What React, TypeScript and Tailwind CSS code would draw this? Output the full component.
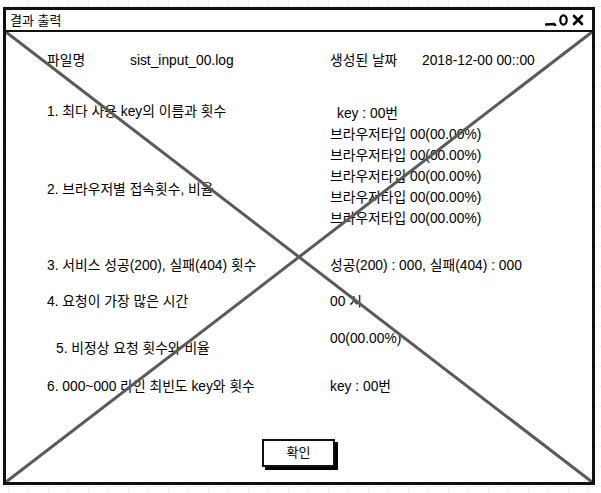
const font = "font-['Liberation_Sans','Noto_Sans_CJK_KR',sans-serif]";

const browsers = Array.from({ length: 5 }, () => '브라우저타입 00(00.00%)');

function WindowControls() {
  return (
    <svg width="42" height="12" viewBox="0 0 42 12" className="mr-[5px]">
      <path d="M1 10.5 L9 10 L10 11" stroke="#000" strokeWidth="2.6" fill="none" strokeLinecap="round" />
      <ellipse cx="18.5" cy="6" rx="3.2" ry="4.6" stroke="#000" strokeWidth="2.2" fill="none" />
      <path d="M29 2 L37 10 M37 2 L29 10" stroke="#000" strokeWidth="2.6" fill="none" strokeLinecap="round" />
    </svg>
  );
}

export default function App() {
  return (
    <div
      className={`min-h-[493px] w-[601px] bg-white bg-[linear-gradient(to_right,#efefef_1px,transparent_1px),linear-gradient(to_bottom,#efefef_1px,transparent_1px)] bg-[size:20px_20px] bg-[position:8px_6px] pt-[7px] pl-[3px] ${font} text-black`}
    >
      <div className="flex h-[478px] w-[592px] flex-col border-[3px] border-[#111] bg-white">
        <div className="flex h-[22px] shrink-0 items-center justify-between border-b-[2px] border-[#111] pl-[4px]">
          <span className="text-[13px] leading-none">결과 출력</span>
          <WindowControls />
        </div>

        <div className="relative flex-1 pl-[41px] text-[13.8px]">
          {/* file name / date */}
          <div className="mt-[19px] flex leading-5">
            <div className="flex w-[283px]">
              <span className="w-[83px]">파일명</span>
              <span>sist_input_00.log</span>
            </div>
            <div className="flex">
              <span className="w-[92px]">생성된 날짜</span>
              <span>2018-12-00 00::00</span>
            </div>
          </div>

          {/* 1, 2 */}
          <div className="mt-[31px] flex">
            <div className="flex w-[283px] flex-col leading-5">
              <span>1. 최다 사용 key의 이름과 횟수</span>
              <span className="mt-[58px]">2. 브라우저별 접속횟수, 비율</span>
            </div>
            <div className="flex flex-col pt-[1px] leading-[21px]">
              <span className="pl-[7px]">key : 00번</span>
              {browsers.map((b, i) => (
                <span key={i}>{b}</span>
              ))}
            </div>
          </div>

          <div className="mt-[27px] flex leading-5">
            <span className="w-[283px]">3. 서비스 성공(200), 실패(404) 횟수</span>
            <span>성공(200) : 000, 실패(404) : 000</span>
          </div>

          <div className="mt-[16px] flex leading-5">
            <span className="w-[283px]">4. 요청이 가장 많은 시간</span>
            <span>00 시</span>
          </div>

          <div className="mt-[17px] flex leading-5">
            <span className="mt-[10px] w-[283px] pl-[9px]">5. 비정상 요청 횟수와 비율</span>
            <span>00(00.00%)</span>
          </div>

          <div className="mt-[18px] flex leading-5">
            <span className="w-[283px]">6. 000~000 라인 최빈도 key와 횟수</span>
            <span>key : 00번</span>
          </div>

          <div className="mt-[42px] flex pl-[215px]">
            <button className="h-[28px] w-[73px] border-2 border-[#111] bg-white text-[13px] shadow-[3px_3px_0_#000]">
              확인
            </button>
          </div>

          {/* placeholder X */}
          <svg
            className="pointer-events-none absolute inset-0 h-full w-full"
            viewBox="0 0 100 100"
            preserveAspectRatio="none"
          >
            <line x1="0" y1="0" x2="100" y2="100" stroke="#5a5a5a" strokeWidth="3" vectorEffect="non-scaling-stroke" />
            <line x1="100" y1="0" x2="0" y2="100" stroke="#5a5a5a" strokeWidth="3" vectorEffect="non-scaling-stroke" />
          </svg>
        </div>
      </div>
    </div>
  );
}
